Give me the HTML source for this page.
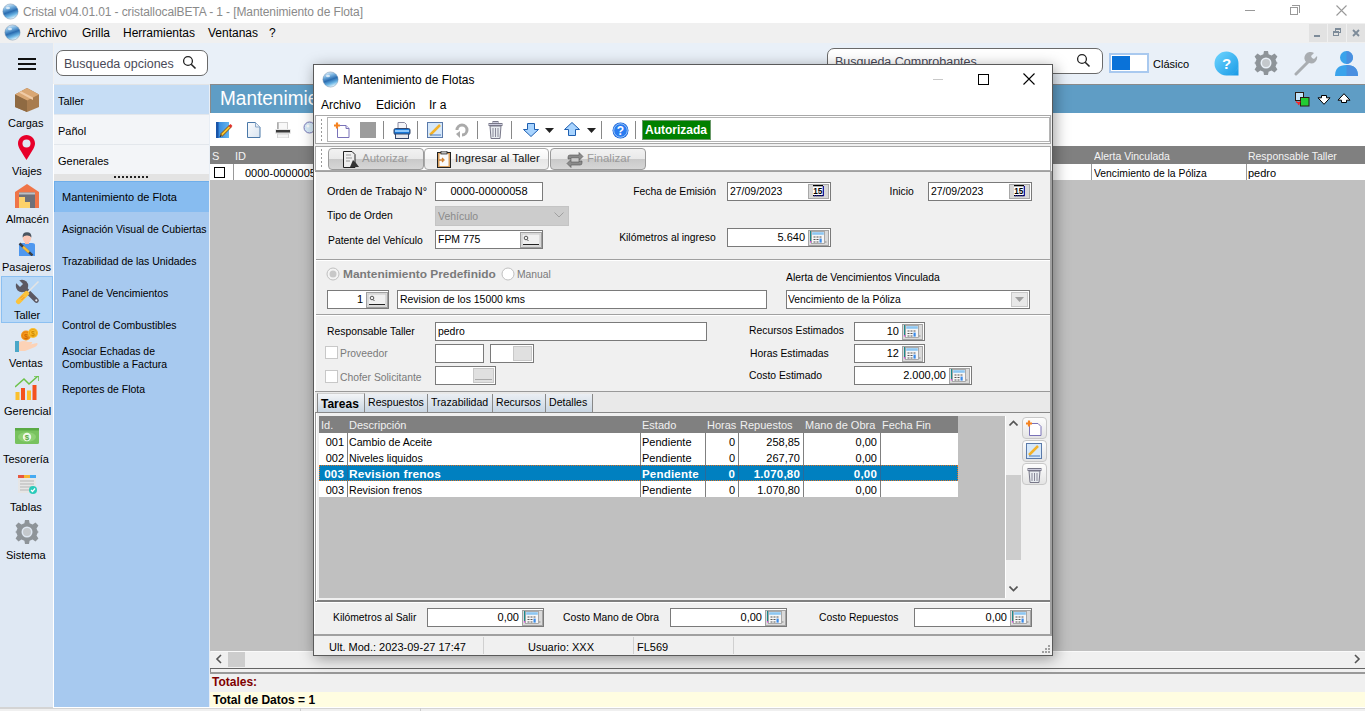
<!DOCTYPE html>
<html><head><meta charset="utf-8">
<style>
*{margin:0;padding:0;box-sizing:border-box}
html,body{width:1365px;height:711px;overflow:hidden;background:#f0f0f0;font-family:"Liberation Sans",sans-serif;font-size:12px;color:#000}
.a{position:absolute}
.t{position:absolute;white-space:nowrap;line-height:1}
</style></head><body>
<!-- title bar -->
<div class="a" style="left:0;top:0;width:1365px;height:23px;background:#fff"></div>
<!-- menu bar -->
<div class="a" style="left:0;top:23px;width:1365px;height:20px;background:#f0f0f0"></div>
<!-- left sidebar -->
<div class="a" style="left:0;top:43px;width:53px;height:664px;background:#dfe8f3"></div>
<div class="a" style="left:53px;top:84px;width:1px;height:624px;background:#fff"></div>
<!-- top toolbar -->
<div class="a" style="left:54px;top:43px;width:1311px;height:41px;background:#e9f0f8"></div>
<!-- menu panel -->
<div class="a" style="left:54px;top:84px;width:156px;height:30px;background:#c6ddf5"></div>
<div class="a" style="left:54px;top:114px;width:156px;height:60px;background:#f3f5f8"></div>
<div class="a" style="left:54px;top:144px;width:156px;height:1px;background:#e3e7ec"></div>
<div class="a" style="left:54px;top:114px;width:156px;height:1px;background:#e3e7ec"></div>
<div class="a" style="left:54px;top:174px;width:156px;height:7px;background:#e3e3e3"></div>
<div class="a" style="left:54px;top:181px;width:156px;height:526px;background:#a7c9ef"></div>
<div class="a" style="left:54px;top:181px;width:156px;height:31px;background:#87bcf0;border-top:1px solid #6faeea;border-left:1px solid #6faeea"></div>
<!-- main area -->
<div class="a" style="left:209px;top:84px;width:1px;height:623px;background:#e8eef5"></div>
<div class="a" style="left:210px;top:84px;width:1155px;height:1px;background:#8a8a8a"></div>
<div class="a" style="left:210px;top:84px;width:1px;height:623px;background:#8a8a8a"></div>
<div class="a" style="left:211px;top:85px;width:1154px;height:28px;background:#5f9dc5"></div>
<div class="a" style="left:210px;top:113px;width:1155px;height:33px;background:#fff"></div>
<div class="a" style="left:210px;top:146px;width:1155px;height:18px;background:#808080"></div>
<div class="a" style="left:210px;top:164px;width:1155px;height:16px;background:#fff"></div>
<div class="a" style="left:210px;top:180px;width:1155px;height:471px;background:#c0c0c0"></div>
<div class="a" style="left:210px;top:651px;width:1155px;height:17px;background:#f0f0f0"></div>
<div class="a" style="left:211px;top:651px;width:1154px;height:1px;background:#fafafa"></div>
<div class="a" style="left:210px;top:668px;width:1155px;height:1px;background:#646464"></div>
<div class="a" style="left:210px;top:672px;width:1155px;height:2px;background:#999"></div>
<div class="a" style="left:210px;top:674px;width:1155px;height:18px;background:#f0f0f0"></div>
<div class="a" style="left:210px;top:692px;width:1155px;height:15px;background:#fffde1"></div>
<div class="a" style="left:53px;top:707px;width:1312px;height:1px;background:#fff"></div>
<div class="a" style="left:0;top:707px;width:53px;height:1px;background:#d4d4d4"></div>
<div class="a" style="left:0;top:708px;width:1365px;height:1px;background:#d4d4d4"></div>


<!-- TITLE BAR CONTENT -->
<svg class="a" style="left:2px;top:3px" width="17" height="17" viewBox="0 0 17 17"><defs><linearGradient id="gl" x1="0.2" y1="0" x2="0.55" y2="1"><stop offset="0" stop-color="#eef8ff"/><stop offset=".3" stop-color="#78b2e0"/><stop offset=".55" stop-color="#2a6cb0"/><stop offset=".78" stop-color="#6ab4e4"/><stop offset="1" stop-color="#e6f8ff"/></linearGradient></defs><circle cx="8.5" cy="8.5" r="7.6" fill="url(#gl)" stroke="#5a7a9a" stroke-width=".4"/><ellipse cx="6" cy="5" rx="2" ry="1.2" fill="#fff" opacity=".7"/></svg>
<div class="t" style="left:23px;top:6px;font-size:12px;color:#8a8a8a;letter-spacing:-0.1px">Cristal v04.01.01 - cristallocalBETA - 1 - [Mantenimiento de Flota]</div>
<div class="a" style="left:1245px;top:10px;width:10px;height:1px;background:#999"></div>
<div class="a" style="left:1292px;top:5px;width:8px;height:8px;border:1px solid #999;border-left:none;border-bottom:none"></div>
<div class="a" style="left:1290px;top:7px;width:8px;height:8px;border:1px solid #999;background:#fff"></div>
<svg class="a" style="left:1336px;top:5px" width="11" height="11"><path d="M0.5 0.5L10.5 10.5M10.5 0.5L0.5 10.5" stroke="#999" stroke-width="1.1"/></svg>
<!-- MENU BAR CONTENT -->
<svg class="a" style="left:4px;top:24px" width="17" height="17" viewBox="0 0 17 17"><circle cx="8.5" cy="8.5" r="7.6" fill="url(#gl)" stroke="#5a7a9a" stroke-width=".4"/><ellipse cx="6" cy="5" rx="2" ry="1.2" fill="#fff" opacity=".7"/></svg>
<div class="t" style="left:27px;top:27px;font-size:12px">Archivo</div>
<div class="t" style="left:82px;top:27px;font-size:12px">Grilla</div>
<div class="t" style="left:123px;top:27px;font-size:12px">Herramientas</div>
<div class="t" style="left:208px;top:27px;font-size:12px">Ventanas</div>
<div class="t" style="left:269px;top:27px;font-size:12px">?</div>
<div class="a" style="left:1309px;top:24px;width:18px;height:18px;background:#e2e2e2"></div>
<div class="a" style="left:1328px;top:24px;width:18px;height:18px;background:#e2e2e2"></div>
<div class="a" style="left:1347px;top:24px;width:18px;height:18px;background:#e2e2e2"></div>
<div class="a" style="left:1314px;top:35px;width:6px;height:2px;background:#7d8b99"></div>
<div class="a" style="left:1335px;top:28px;width:6px;height:5px;border:1px solid #7d8b99;border-top-width:2px"></div>
<div class="a" style="left:1333px;top:31px;width:6px;height:5px;border:1px solid #7d8b99;border-top-width:2px;background:#e2e2e2"></div>
<svg class="a" style="left:1352px;top:29px" width="8" height="8"><path d="M1 1L7 7M7 1L1 7" stroke="#7d8b99" stroke-width="1.8"/></svg>
<!-- SIDEBAR -->
<div class="a" style="left:18px;top:58px;width:18px;height:2px;background:#111"></div>
<div class="a" style="left:18px;top:63px;width:18px;height:2px;background:#111"></div>
<div class="a" style="left:18px;top:68px;width:18px;height:2px;background:#111"></div>
<!-- cargas box -->
<svg class="a" style="left:15px;top:88px" width="24" height="24" viewBox="0 0 24 24"><path d="M12 0L24 6.5V19L12 24L0 19V6.5Z" fill="#a87c4f"/><path d="M12 0L24 6.5L12 12.5L0 6.5Z" fill="#d9a774"/><path d="M0 6.5L12 12.5V24L0 19Z" fill="#8f6a42"/><path d="M6 3.2L18 9.4V12L16 11L4 4.6Z" fill="#f0cba6"/></svg>
<div class="t" style="left:8px;top:118px;font-size:11px">Cargas</div>
<svg class="a" style="left:18px;top:135px" width="17" height="25" viewBox="0 0 17 25"><path d="M8.5 0C3.8 0 0 3.8 0 8.5C0 12 2 14.5 8.5 25C15 14.5 17 12 17 8.5C17 3.8 13.2 0 8.5 0Z" fill="#e8002a"/><circle cx="8.5" cy="8.5" r="4" fill="#dfe8f3"/></svg>
<div class="t" style="left:12px;top:166px;font-size:11px">Viajes</div>
<svg class="a" style="left:15px;top:184px" width="24" height="24" viewBox="0 0 24 24"><path d="M0 8L12 0L24 8V24H0Z" fill="#ef7548"/><rect x="4" y="8.5" width="16" height="15.5" fill="#6e7079"/><rect x="4" y="8.5" width="16" height="2" fill="#bcc0c4"/><rect x="4" y="13" width="6" height="11" fill="#fdd26a"/><rect x="10" y="18" width="5" height="6" fill="#fdd26a"/></svg>
<div class="t" style="left:6px;top:214px;font-size:11px">Almacén</div>
<svg class="a" style="left:18px;top:231px" width="18" height="25" viewBox="0 0 18 25"><path d="M1 14Q1 12 4 12H14Q17 12 17 14V25H1Z" fill="#4f98ef"/><rect x="7" y="9" width="4" height="4" fill="#f7b7a3"/><ellipse cx="9" cy="7" rx="4.2" ry="4.8" fill="#fcc8b6"/><path d="M4.6 6.5Q4.2 1.2 9 1.2Q13.8 1.2 13.4 6.5Q12 4.2 9 4.4Q6 4.2 4.6 6.5Z" fill="#4a5560"/><path d="M1.5 12.5L14.5 24.5" stroke="#3a3f46" stroke-width="2.4"/><path d="M5 15.8L11 21.3" stroke="#f6bd3a" stroke-width="2.6"/></svg>
<div class="t" style="left:2px;top:262px;font-size:11px">Pasajeros</div>
<div class="a" style="left:1px;top:276px;width:52px;height:47px;background:#b7d7f6;border:1px solid #8cc0f1"></div>
<svg class="a" style="left:15px;top:279px" width="26" height="26" viewBox="0 0 26 26"><path d="M9 9L21.5 21.5" stroke="#5b5862" stroke-width="4.6" stroke-linecap="round"/><circle cx="7" cy="7" r="6.2" fill="#5b5862"/><path d="M1 1L6.5 6.5" stroke="#b7d7f6" stroke-width="4.2"/><circle cx="21.3" cy="21.3" r="1.1" fill="#e8eef5"/><path d="M13 13L23.5 2.5" stroke="#e4e4e4" stroke-width="1.6"/><path d="M3.5 22.5L11.5 14.5" stroke="#fbc33c" stroke-width="5" stroke-linecap="round"/><path d="M5 19.5L8 16.5M6.5 21L9.5 18" stroke="#f08a2a" stroke-width="1"/></svg>
<div class="t" style="left:14px;top:310px;font-size:11px">Taller</div>
<svg class="a" style="left:15px;top:328px" width="24" height="24" viewBox="0 0 24 24"><circle cx="11" cy="7.5" r="5" fill="#f59a1d"/><circle cx="11" cy="7.5" r="3.6" fill="none" stroke="#e07a10" stroke-width=".8"/><circle cx="18" cy="5" r="5" fill="#fbbf2f"/><circle cx="18" cy="5" r="3.6" fill="none" stroke="#e8a010" stroke-width=".8"/><text x="11" y="10.5" font-family="Liberation Sans" font-size="7" font-weight="bold" text-anchor="middle" fill="#d06a00">$</text><text x="18" y="8" font-family="Liberation Sans" font-size="7" font-weight="bold" text-anchor="middle" fill="#d08a00">$</text><path d="M0 13H4V24H0Z" fill="#4aa7c8"/><path d="M4 14Q9 12 13 14H17Q18 16 13 17L22 15Q24 16 20 19L10 23H4Z" fill="#fcd2b6"/></svg>
<div class="t" style="left:9px;top:358px;font-size:11px">Ventas</div>
<svg class="a" style="left:15px;top:376px" width="24" height="24" viewBox="0 0 24 24"><path d="M0 11L9 3L14 8L23 0" stroke="#6cc24a" stroke-width="1.5" fill="none"/><path d="M19 0H24V5" stroke="#6cc24a" stroke-width="1.5" fill="none"/><rect x="0.5" y="16" width="4" height="8" fill="#fbc02d"/><rect x="6" y="12" width="4" height="12" fill="#f4511e"/><rect x="12" y="14.5" width="4" height="9.5" fill="#fbc02d"/><rect x="17.5" y="9" width="4" height="15" fill="#f4511e"/></svg>
<div class="t" style="left:4px;top:406px;font-size:11px">Gerencial</div>
<svg class="a" style="left:15px;top:428px" width="24" height="16" viewBox="0 0 24 16"><rect x="0" y="0" width="24" height="16" rx="1.5" fill="#78c25e"/><rect x="0" y="0" width="24" height="2.5" fill="#5aaa44"/><ellipse cx="12" cy="9" rx="9" ry="4.8" fill="#8ed174"/><circle cx="12" cy="9" r="4.2" fill="#eef8e8"/><text x="12" y="12" font-family="Liberation Sans" font-size="8" font-weight="bold" text-anchor="middle" fill="#5aaa44">$</text></svg>
<div class="t" style="left:3px;top:454px;font-size:11px">Tesorería</div>
<svg class="a" style="left:18px;top:475px" width="19" height="19" viewBox="0 0 19 19"><rect x="0" y="0" width="18" height="3" fill="#e8573f"/><rect x="6" y="0" width="6" height="3" fill="#f7b731"/><rect x="12" y="0" width="6" height="3" fill="#45aaf2"/><rect x="0" y="3" width="18" height="15" fill="#e6e6e6"/><path d="M2 6H16M2 9H16M2 12H16M2 15H16" stroke="#b5b5b5" stroke-width="1"/><circle cx="15" cy="15" r="4" fill="#2bcbba"/><path d="M13 15L14.5 16.5L17 13.5" stroke="#fff" stroke-width="1.2" fill="none"/></svg>
<div class="t" style="left:10px;top:502px;font-size:11px">Tablas</div>
<svg class="a" style="left:15px;top:520px" width="24" height="24" viewBox="0 0 24 24"><path d="M10 0H14L14.6 3.2L17.6 4.5L20.5 2.6L23.4 5.5L21.5 8.4L22.8 11.4L24 12V12L22.8 12.6L21.5 15.6L23.4 18.5L20.5 21.4L17.6 19.5L14.6 20.8L14 24H10L9.4 20.8L6.4 19.5L3.5 21.4L0.6 18.5L2.5 15.6L1.2 12.6L0 12L1.2 11.4L2.5 8.4L0.6 5.5L3.5 2.6L6.4 4.5L9.4 3.2Z" fill="#8e9499"/><circle cx="12" cy="12" r="5.5" fill="#dfe8f3"/><circle cx="12" cy="12" r="4" fill="#c4c8cc"/></svg>
<div class="t" style="left:6px;top:550px;font-size:11px">Sistema</div>


<!-- TOP TOOLBAR CONTENT -->
<div class="a" style="left:56px;top:50px;width:152px;height:26px;border:1px solid #6a6a6a;border-radius:7px;background:#fff"></div>
<div class="t" style="left:64px;top:58px;font-size:12.5px;color:#4a4a58">Busqueda opciones</div>
<svg class="a" style="left:182px;top:55px" width="16" height="16" viewBox="0 0 16 16"><circle cx="6" cy="6" r="4.4" stroke="#222" stroke-width="1.3" fill="none"/><path d="M9.2 9.2L13.5 13.5" stroke="#222" stroke-width="1.6"/></svg>
<div class="a" style="left:827px;top:48px;width:276px;height:26px;border:1px solid #6a6a6a;border-radius:7px;background:#fff"></div>
<div class="t" style="left:835px;top:56px;font-size:12.5px;color:#4a4a58">Busqueda Comprobantes</div>
<svg class="a" style="left:1076px;top:53px" width="16" height="16" viewBox="0 0 16 16"><circle cx="6" cy="6" r="4.4" stroke="#222" stroke-width="1.3" fill="none"/><path d="M9.2 9.2L13.5 13.5" stroke="#222" stroke-width="1.6"/></svg>
<div class="a" style="left:1109px;top:53px;width:40px;height:20px;border:2px solid #a9c9ef;background:#fff"></div>
<div class="a" style="left:1112px;top:56px;width:18px;height:14px;background:#0a72d8"></div>
<div class="t" style="left:1153px;top:59px;font-size:11px">Clásico</div>
<svg class="a" style="left:1214px;top:51px" width="25" height="25" viewBox="0 0 25 25"><defs><linearGradient id="qg" x1="0" y1="0" x2="1" y2="1"><stop offset="0" stop-color="#6fd6ff"/><stop offset="1" stop-color="#1a9ae6"/></linearGradient></defs><path d="M12.5 0.5A12 12 0 1 0 24.5 13V24.5H12.5A12 12 0 0 0 12.5 0.5Z" fill="url(#qg)"/><text x="12.5" y="18" font-family="Liberation Sans" font-size="15" font-weight="bold" fill="#fff" text-anchor="middle">?</text></svg>
<svg class="a" style="left:1254px;top:51px" width="24" height="24" viewBox="0 0 24 24"><path d="M10 0H14L14.6 3.2L17.6 4.5L20.5 2.6L23.4 5.5L21.5 8.4L22.8 11.4L24 12V12L22.8 12.6L21.5 15.6L23.4 18.5L20.5 21.4L17.6 19.5L14.6 20.8L14 24H10L9.4 20.8L6.4 19.5L3.5 21.4L0.6 18.5L2.5 15.6L1.2 12.6L0 12L1.2 11.4L2.5 8.4L0.6 5.5L3.5 2.6L6.4 4.5L9.4 3.2Z" fill="#8e9499"/><circle cx="12" cy="12" r="5.5" fill="#e9f0f8"/><circle cx="12" cy="12" r="4" fill="#c4c8cc"/></svg>
<svg class="a" style="left:1294px;top:51px" width="25" height="25" viewBox="0 0 25 25"><path d="M2 23L15 10" stroke="#a9adb1" stroke-width="3" stroke-linecap="round"/><path d="M13 12A6 6 0 0 1 20 2L17 5L18 7L20 8L23 5A6 6 0 0 1 15 12Z" fill="#a9adb1"/></svg>
<svg class="a" style="left:1335px;top:51px" width="23" height="25" viewBox="0 0 23 25"><circle cx="11.5" cy="6.5" r="6.5" fill="#3aa3eb"/><path d="M11.5 0A6.5 6.5 0 0 1 11.5 13Z" fill="#4a8fe0"/><path d="M0 25Q0 14 11.5 14Q23 14 23 25Z" fill="#3aa3eb"/><path d="M11.5 14Q23 14 23 25H11.5Z" fill="#4a8fe0"/></svg>
<div class="a" style="left:54px;top:84px;width:156px;height:1px;background:#e2e4e6"></div>
<!-- MENU PANEL TEXT -->
<div class="t" style="left:58px;top:96px;font-size:11px">Taller</div>
<div class="t" style="left:58px;top:126px;font-size:11px">Pañol</div>
<div class="t" style="left:58px;top:156px;font-size:11px">Generales</div>
<div class="a" style="left:114px;top:176px;width:34px;height:2px;background:repeating-linear-gradient(90deg,#222 0 2px,transparent 2px 4px)"></div>
<div class="t" style="left:62px;top:192px;font-size:11px">Mantenimiento de Flota</div>
<div class="t" style="left:62px;top:224px;font-size:11px;transform:scaleX(.95);transform-origin:0 0">Asignación Visual de Cubiertas</div>
<div class="t" style="left:62px;top:256px;font-size:11px;transform:scaleX(.95);transform-origin:0 0">Trazabilidad de las Unidades</div>
<div class="t" style="left:62px;top:288px;font-size:11px;transform:scaleX(.95);transform-origin:0 0">Panel de Vencimientos</div>
<div class="t" style="left:62px;top:320px;font-size:11px;transform:scaleX(.95);transform-origin:0 0">Control de Combustibles</div>
<div class="t" style="left:62px;top:346px;font-size:11px;transform:scaleX(.95);transform-origin:0 0">Asociar Echadas de</div>
<div class="t" style="left:62px;top:359px;font-size:11px;transform:scaleX(.95);transform-origin:0 0">Combustible a Factura</div>
<div class="t" style="left:62px;top:384px;font-size:11px;transform:scaleX(.95);transform-origin:0 0">Reportes de Flota</div>
<!-- MAIN HEADER -->
<div class="t" style="left:220px;top:89px;font-size:19.5px;color:#fff;transform:scaleX(.975);transform-origin:0 0">Mantenimiento de Flota</div>
<svg class="a" style="left:1295px;top:92px" width="15" height="15" viewBox="0 0 15 15"><rect x="0.5" y="0.5" width="8" height="8" fill="#c4e4fa" stroke="#2a1a10"/><rect x="5.5" y="5.5" width="8.5" height="8.5" fill="#22cc33" stroke="#2a1a10"/><path d="M1 9.5L3 11L4.5 10.5L3.5 13" stroke="#f22" stroke-width="1.4" fill="none"/></svg>
<svg class="a" style="left:1317px;top:95px" width="14" height="10" viewBox="0 0 14 10"><path d="M4.5 0.5H9.5V2.8H13L7 9.3L1 2.8H4.5Z" fill="#fff" stroke="#000"/></svg>
<svg class="a" style="left:1337px;top:93px" width="14" height="10" viewBox="0 0 14 10"><path d="M4.5 9.5H9.5V7.2H13L7 0.7L1 7.2H4.5Z" fill="#fff" stroke="#000"/></svg>
<!-- MAIN TOOLBAR ICONS -->
<svg class="a" style="left:216px;top:122px" width="17" height="16" viewBox="0 0 17 16"><defs><linearGradient id="bk" x1="0" x2="1"><stop offset="0" stop-color="#1f62c0"/><stop offset=".25" stop-color="#3a8ee0"/><stop offset="1" stop-color="#62b4ee"/></linearGradient></defs><rect x="0" y="0" width="13" height="16" fill="url(#bk)"/><rect x="0" y="0" width="2.5" height="16" fill="#1a55a8"/><path d="M5 13.5L14.5 4" stroke="#7a4a10" stroke-width="3.2"/><path d="M5 13.5L14.5 4" stroke="#f5c431" stroke-width="2"/><path d="M13.5 5L15.5 3" stroke="#e0302a" stroke-width="2.6"/><path d="M4 15L5.5 12.5" stroke="#333" stroke-width="1.2"/></svg>
<svg class="a" style="left:247px;top:122px" width="14" height="17" viewBox="0 0 14 17"><defs><linearGradient id="dg" x1="0" y1="0" x2="1" y2="1"><stop offset="0" stop-color="#fbfcfe"/><stop offset="1" stop-color="#d8e4f0"/></linearGradient></defs><path d="M0.5 0.5H8.5L13 5V15.5H0.5Z" fill="url(#dg)" stroke="#4a78a8"/><path d="M8.5 0.5V5H13" fill="#e8eef6" stroke="#8aa8c8"/></svg>
<svg class="a" style="left:275px;top:122px" width="16" height="16" viewBox="0 0 16 16"><rect x="2.5" y="0.5" width="10" height="7" fill="#f8f8f8" stroke="#d0d0d0"/><rect x="2.5" y="0.5" width="1" height="7" fill="#888"/><rect x="0" y="7" width="16" height="5" rx="1" fill="#e6e6e6"/><rect x="1" y="8" width="14" height="2.5" fill="#3a3a3a"/><rect x="2.5" y="12" width="11" height="4" fill="#f4f4f4" stroke="#d4d4d4"/></svg>
<svg class="a" style="left:302px;top:121px" width="13" height="17" viewBox="0 0 13 17"><circle cx="7.5" cy="6.5" r="5.5" fill="#d8ecfa" stroke="#7a78b8"/><circle cx="6" cy="5" r="1.5" fill="#fff"/><path d="M11.5 10.5L13 13" stroke="#e0902a" stroke-width="2"/></svg>
<!-- MAIN GRID -->
<div class="t" style="left:212px;top:151px;font-size:11px;color:#f4f4f4">S</div>
<div class="t" style="left:235px;top:151px;font-size:11px;color:#f4f4f4">ID</div>
<div class="t" style="left:1094px;top:151px;font-size:11px;color:#f4f4f4;transform:scaleX(.95);transform-origin:0 0">Alerta Vinculada</div>
<div class="t" style="left:1248px;top:151px;font-size:11px;color:#f4f4f4;transform:scaleX(.95);transform-origin:0 0">Responsable Taller</div>
<div class="a" style="left:214px;top:167px;width:11px;height:11px;border:1px solid #000;background:#fff"></div>
<div class="a" style="left:233px;top:164px;width:1px;height:16px;background:#999"></div>
<div class="t" style="left:245px;top:168px;font-size:11px">0000-00000058</div>
<div class="a" style="left:1091px;top:164px;width:1px;height:16px;background:#999"></div>
<div class="t" style="left:1094px;top:168px;font-size:11px;transform:scaleX(.94);transform-origin:0 0">Vencimiento de la Póliza</div>
<div class="a" style="left:1246px;top:164px;width:1px;height:16px;background:#999"></div>
<div class="t" style="left:1248px;top:168px;font-size:11px">pedro</div>
<!-- H SCROLL + TOTALS -->
<svg class="a" style="left:215px;top:654px" width="8" height="10" viewBox="0 0 8 10"><path d="M6 1L2 5L6 9" stroke="#555" stroke-width="1.6" fill="none"/></svg>
<div class="a" style="left:228px;top:652px;width:17px;height:15px;background:#cdcdcd"></div>
<svg class="a" style="left:1353px;top:654px" width="8" height="10" viewBox="0 0 8 10"><path d="M2 1L6 5L2 9" stroke="#555" stroke-width="1.6" fill="none"/></svg>
<div class="t" style="left:212px;top:676px;font-size:12px;font-weight:bold;color:#800000">Totales:</div>
<div class="t" style="left:213px;top:694px;font-size:12px;font-weight:bold">Total de Datos = 1</div>
<div class="a" style="left:300px;top:708px;width:1px;height:3px;background:#ccc"></div>
<div class="a" style="left:420px;top:708px;width:1px;height:3px;background:#ccc"></div>

<!-- dialog -->
<div class="a" style="left:313px;top:64px;width:740px;height:592px;background:#f0f0f0;border:1px solid #5a5a5a;box-shadow:2px 3px 14px rgba(0,0,0,.38)"></div>
<div class="a" style="left:314px;top:65px;width:738px;height:50px;background:#fff"></div>
<svg class="a" style="left:322px;top:71px" width="17" height="17" viewBox="0 0 17 17"><circle cx="8.5" cy="8.5" r="7.6" fill="url(#gl)" stroke="#5a7a9a" stroke-width=".4"/><ellipse cx="6" cy="5" rx="2" ry="1.2" fill="#fff" opacity=".7"/></svg>
<div class="t" style="left:343px;top:74px;font-size:12px;">Mantenimiento de Flotas</div>
<div class="a" style="left:933px;top:79px;width:10px;height:1px;background:#c8c8c8"></div>
<div class="a" style="left:978px;top:74px;width:11px;height:11px;border:1px solid #000"></div>
<svg class="a" style="left:1023px;top:73px" width="12" height="12"><path d="M0.5 0.5L11.5 11.5M11.5 0.5L0.5 11.5" stroke="#000" stroke-width="1.1"/></svg>
<div class="t" style="left:321px;top:99px;font-size:12px;">Archivo</div>
<div class="t" style="left:376px;top:99px;font-size:12px;">Edición</div>
<div class="t" style="left:429px;top:99px;font-size:12px;">Ir a</div>
<div class="a" style="left:315px;top:115px;width:736px;height:29px;border:1px solid #a8a8a8;background:#fff"></div>
<div class="a" style="left:327px;top:117px;width:723px;height:25px;border:1px solid #b4b4b4;background:#fff"></div>
<div class="a" style="left:321px;top:119px;width:1px;height:22px;background:repeating-linear-gradient(180deg,#999 0 2px,transparent 2px 4px)"></div>
<div class="a" style="left:315px;top:146px;width:736px;height:25px;border:1px solid #a8a8a8;background:#fff"></div>
<div class="a" style="left:321px;top:149px;width:1px;height:20px;background:repeating-linear-gradient(180deg,#999 0 2px,transparent 2px 4px)"></div>
<div class="a" style="left:314px;top:171px;width:738px;height:1px;background:#a0a0a0"></div>
<svg class="a" style="left:334px;top:122px" width="16" height="16" viewBox="0 0 16 16"><path d="M3.5 3.5H12L15 6.5V15.5H3.5Z" fill="#fff" stroke="#7a72b8"/><path d="M12 3.5V6.5H15" fill="#e8e8f4" stroke="#7a72b8"/><path d="M3 0.5V6.5M0 3.5H6" stroke="#f5821f" stroke-width="2.2"/></svg>
<div class="a" style="left:360px;top:122px;width:16px;height:16px;background:#9c9c9c"></div>
<div class="a" style="left:383px;top:121px;width:1px;height:18px;background:#888"></div>
<svg class="a" style="left:393px;top:122px" width="18" height="17" viewBox="0 0 18 17"><path d="M5 0.5H11.5L13.5 2.5V7H5Z" fill="#f4f4f8" stroke="#8a8aa0"/><rect x="1" y="6.5" width="16" height="6" rx="1.5" fill="#1a78d8" stroke="#35466a"/><rect x="2" y="8" width="14" height="2" fill="#8cc8ff"/><rect x="2.5" y="12" width="13" height="4.5" fill="#e6e8ee" stroke="#35466a"/></svg>
<div class="a" style="left:417px;top:121px;width:1px;height:18px;background:#888"></div>
<svg class="a" style="left:427px;top:122px" width="17" height="16" viewBox="0 0 17 16"><rect x="0.5" y="0.5" width="15" height="15" fill="#d6e8fa" stroke="#5a7aaa"/><path d="M3 13L13 3" stroke="#f3b22a" stroke-width="2.5"/><path d="M3 13H14" stroke="#4a7ac0" stroke-width="1"/></svg>
<svg class="a" style="left:455px;top:123px" width="14" height="15" viewBox="0 0 14 15"><path d="M2 7A5 5 0 1 1 7 12" stroke="#aaa" stroke-width="3" fill="none"/><path d="M1 11L5 15V8Z" fill="#aaa"/></svg>
<div class="a" style="left:477px;top:121px;width:1px;height:18px;background:#888"></div>
<svg class="a" style="left:488px;top:121px" width="15" height="18" viewBox="0 0 15 18"><rect x="1" y="2.5" width="13" height="2" fill="#ccd" stroke="#778"/><rect x="5" y="0.5" width="5" height="2" fill="#ccd" stroke="#778"/><path d="M2 5H13L12 17.5H3Z" fill="#e8ecf0" stroke="#778"/><path d="M5 7V16M7.5 7V16M10 7V16" stroke="#889"/></svg>
<div class="a" style="left:511px;top:121px;width:1px;height:18px;background:#888"></div>
<svg class="a" style="left:523px;top:123px" width="16" height="14" viewBox="0 0 16 14"><path d="M4.5 0.5H11.5V6.5H15.5L8 13.5L0.5 6.5H4.5Z" fill="#a8d4ff" stroke="#1e5fb0"/></svg>
<svg class="a" style="left:545px;top:128px" width="9" height="5"><path d="M0 0H9L4.5 5Z" fill="#222"/></svg>
<svg class="a" style="left:564px;top:122px" width="16" height="14" viewBox="0 0 16 14"><path d="M4.5 13.5H11.5V7.5H15.5L8 0.5L0.5 7.5H4.5Z" fill="#a8d4ff" stroke="#1e5fb0"/></svg>
<svg class="a" style="left:587px;top:128px" width="9" height="5"><path d="M0 0H9L4.5 5Z" fill="#222"/></svg>
<div class="a" style="left:601px;top:121px;width:1px;height:18px;background:#888"></div>
<svg class="a" style="left:612px;top:122px" width="17" height="17" viewBox="0 0 17 17"><circle cx="8.5" cy="8.5" r="8" fill="#1360d8"/><circle cx="8.5" cy="8.5" r="6.8" fill="#2a7cf0" stroke="#bfe0ff" stroke-width=".8"/><text x="8.5" y="13" font-family="Liberation Sans" font-size="12" font-weight="bold" text-anchor="middle" fill="#fff">?</text></svg>
<div class="a" style="left:635px;top:121px;width:1px;height:18px;background:#888"></div>
<div class="a" style="left:642px;top:120px;width:69px;height:20px;background:#008000;border:1px solid #6a9a6a"></div>
<div class="t" style="left:645px;top:124px;font-size:12px;font-weight:bold;color:#fff">Autorizada</div>
<div class="a" style="left:328px;top:148px;width:96px;height:22px;background:linear-gradient(180deg,#f2f2f2 0,#e9e9e9 50%,#c9c9c9 51%,#d6d6d6 100%);border:1px solid #9a9a9a;border-radius:4px"></div>
<svg class="a" style="left:343px;top:151px" width="16" height="17" viewBox="0 0 16 17"><path d="M0.5 0.5H9L12 3.5V16.5H0.5Z" fill="#eee" stroke="#222"/><path d="M3 4H8M3 7H9M3 10H7" stroke="#999"/><path d="M7 16L10 9L13 12L16 16Z" fill="#333"/></svg>
<div class="t" style="left:362px;top:153px;font-size:11.5px;color:#9a9a9a">Autorizar</div>
<div class="a" style="left:424px;top:148px;width:125px;height:22px;background:linear-gradient(180deg,#ffffff 0,#f6f6f6 50%,#e6e6e6 51%,#eeeeee 100%);border:1px solid #a8a8a8;border-radius:4px"></div>
<svg class="a" style="left:437px;top:151px" width="14" height="17" viewBox="0 0 14 17"><rect x="0.5" y="1.5" width="13" height="15" fill="#d8a060" stroke="#222"/><rect x="2.5" y="3" width="9" height="12" fill="#fafafa"/><rect x="4" y="0" width="6" height="3" fill="#bbb" stroke="#333" stroke-width=".8"/><path d="M2 9H6M5 7L7 9L5 11" stroke="#d08030" stroke-width="1.3" fill="none"/></svg>
<div class="t" style="left:455px;top:153px;font-size:11.5px;color:#111">Ingresar al Taller</div>
<div class="a" style="left:550px;top:148px;width:96px;height:22px;background:linear-gradient(180deg,#f2f2f2 0,#e9e9e9 50%,#c9c9c9 51%,#d6d6d6 100%);border:1px solid #9a9a9a;border-radius:4px"></div>
<svg class="a" style="left:566px;top:152px" width="18" height="16" viewBox="0 0 18 16"><path d="M2 7V5Q2 3 4 3H13V0.5L17 4.5L13 8.5V6H5V7Z" fill="#8a8a8a" stroke="#555" stroke-width=".6"/><path d="M16 9V11Q16 13 14 13H5V15.5L1 11.5L5 7.5V10H13V9Z" fill="#8a8a8a" stroke="#555" stroke-width=".6"/></svg>
<div class="t" style="left:587px;top:153px;font-size:11.5px;color:#9a9a9a">Finalizar</div>
<div class="t" style="left:327px;top:186px;font-size:11px;transform:scaleX(0.99);transform-origin:0 0;">Orden de Trabajo N°</div>
<div class="a" style="left:435px;top:182px;width:108px;height:19px;background:#fff;border:1px solid #7a7a7a"></div>
<div class="t" style="left:435px;width:108px;text-align:center;top:186px;font-size:11px;color:#000">0000-00000058</div>
<div class="t" style="right:649px;top:186px;font-size:11px;transform:scaleX(0.94);transform-origin:100% 0;">Fecha de Emisión</div>
<div class="a" style="left:727px;top:182px;width:104px;height:19px;background:#fff;border:1px solid #7a7a7a"></div>
<div class="t" style="left:730px;top:186px;font-size:11px;transform:scaleX(0.95);transform-origin:0 0;color:#000">27/09/2023</div>
<svg class="a" style="left:808px;top:184px" width="21" height="15" viewBox="0 0 21 15"><rect x="0.5" y="0.5" width="20" height="14" fill="#d8d8d8" stroke="#a8a8a8"/><rect x="5" y="1" width="10" height="11" fill="#fff"/><rect x="5" y="1" width="10" height="1.3" fill="#000"/><rect x="5" y="11" width="10" height="1.2" fill="#000"/><path d="M6 11.6H15" stroke="#1a1aa0" stroke-width="1.2" stroke-dasharray="1.2 1"/><rect x="14.7" y="2" width="1.3" height="10.2" fill="#1a1a9a"/><text x="9.8" y="9.9" font-family="Liberation Sans" font-size="8.2" font-weight="bold" text-anchor="middle" fill="#000">15</text></svg>
<div class="t" style="right:451px;top:186px;font-size:11px;transform:scaleX(0.94);transform-origin:100% 0;">Inicio</div>
<div class="a" style="left:928px;top:182px;width:104px;height:19px;background:#fff;border:1px solid #7a7a7a"></div>
<div class="t" style="left:931px;top:186px;font-size:11px;transform:scaleX(0.95);transform-origin:0 0;color:#000">27/09/2023</div>
<svg class="a" style="left:1009px;top:184px" width="21" height="15" viewBox="0 0 21 15"><rect x="0.5" y="0.5" width="20" height="14" fill="#d8d8d8" stroke="#a8a8a8"/><rect x="5" y="1" width="10" height="11" fill="#fff"/><rect x="5" y="1" width="10" height="1.3" fill="#000"/><rect x="5" y="11" width="10" height="1.2" fill="#000"/><path d="M6 11.6H15" stroke="#1a1aa0" stroke-width="1.2" stroke-dasharray="1.2 1"/><rect x="14.7" y="2" width="1.3" height="10.2" fill="#1a1a9a"/><text x="9.8" y="9.9" font-family="Liberation Sans" font-size="8.2" font-weight="bold" text-anchor="middle" fill="#000">15</text></svg>
<div class="t" style="left:327px;top:210px;font-size:11px;transform:scaleX(0.94);transform-origin:0 0;">Tipo de Orden</div>
<div class="a" style="left:435px;top:206px;width:134px;height:20px;background:#cccccc;border:1px solid #c4c4c4"></div>
<div class="t" style="left:438px;top:211px;font-size:11px;transform:scaleX(0.95);transform-origin:0 0;color:#8a8a8a">Vehículo</div>
<svg class="a" style="left:554px;top:212px" width="10" height="7"><path d="M0.5 0.5L5 5L9.5 0.5" stroke="#a0a0a0" fill="none"/></svg>
<div class="t" style="left:328px;top:235px;font-size:11px;transform:scaleX(0.94);transform-origin:0 0;">Patente del Vehículo</div>
<div class="a" style="left:435px;top:230px;width:108px;height:19px;background:#fff;border:1px solid #7a7a7a"></div>
<div class="t" style="left:438px;top:234px;font-size:11px;transform:scaleX(0.95);transform-origin:0 0;color:#000">FPM 775</div>
<svg class="a" style="left:520px;top:232px" width="22" height="16" viewBox="0 0 22 16"><rect x="0.5" y="0.5" width="21" height="15" fill="#e6e6e6" stroke="#a0a0a0"/><rect x="2" y="2" width="18" height="12" fill="#f0f0f0" stroke="#c8c8c8"/><circle cx="6" cy="6" r="1.8" stroke="#555" fill="none"/><path d="M7 7.5L8.5 9" stroke="#555"/><path d="M3 12.5H19" stroke="#222" stroke-width="1"/></svg>
<div class="t" style="right:649px;top:232px;font-size:11px;transform:scaleX(0.94);transform-origin:100% 0;">Kilómetros al ingreso</div>
<div class="a" style="left:727px;top:228px;width:104px;height:19px;background:#fff;border:1px solid #7a7a7a"></div>
<div class="t" style="left:727px;width:78px;text-align:right;top:232px;font-size:11px;color:#000">5.640</div>
<svg class="a" style="left:808px;top:230px" width="21" height="16" viewBox="0 0 21 16"><rect x="0.5" y="0.5" width="20" height="15" fill="#dadada" stroke="#a4a4a4"/><rect x="2" y="1" width="1.2" height="11" fill="#1a8a8a"/><rect x="2" y="11" width="1.2" height="1.5" fill="#e040e0"/><rect x="3.5" y="1.5" width="13" height="12" fill="#f6f6f6" stroke="#9a9a9a" stroke-width=".8"/><rect x="4.2" y="2.2" width="11.6" height="2.6" fill="#8cc6f2"/><path d="M5.5 7h2M8.5 7h2M5.5 9.5h2M8.5 9.5h2M5.5 12h2M8.5 12h2M11.5 7h2" stroke="#555" stroke-width="1.1"/><rect x="11.5" y="8.6" width="2.2" height="4" fill="#3a8ae8"/><rect x="17.3" y="11.5" width="1" height="1" fill="#666"/></svg>
<div class="a" style="left:315px;top:259px;width:735px;height:1px;background:#a0a0a0"></div>
<div class="a" style="left:315px;top:260px;width:735px;height:1px;background:#fff"></div>
<svg class="a" style="left:326px;top:267px" width="14" height="14"><circle cx="7" cy="7" r="6" fill="#f4f4f4" stroke="#c0c0c0"/><circle cx="7" cy="7" r="3.5" fill="#c8c8c8"/></svg>
<div class="t" style="left:343px;top:269px;font-size:11.5px;transform:scaleX(1.035);transform-origin:0 0;font-weight:bold;color:#7a7a7a">Mantenimiento Predefinido</div>
<svg class="a" style="left:501px;top:267px" width="14" height="14"><circle cx="7" cy="7" r="6" fill="#fff" stroke="#c0c0c0"/></svg>
<div class="t" style="left:517px;top:269px;font-size:11px;transform:scaleX(0.94);transform-origin:0 0;color:#7a7a7a">Manual</div>
<div class="t" style="left:786px;top:272px;font-size:11px;transform:scaleX(0.94);transform-origin:0 0;">Alerta de Vencimientos Vinculada</div>
<div class="a" style="left:327px;top:290px;width:62px;height:19px;background:#fff;border:1px solid #7a7a7a"></div>
<div class="t" style="left:327px;width:36px;text-align:right;top:294px;font-size:11px;color:#000">1</div>
<svg class="a" style="left:366px;top:292px" width="22" height="16" viewBox="0 0 22 16"><rect x="0.5" y="0.5" width="21" height="15" fill="#e6e6e6" stroke="#a0a0a0"/><rect x="2" y="2" width="18" height="12" fill="#f0f0f0" stroke="#c8c8c8"/><circle cx="6" cy="6" r="1.8" stroke="#555" fill="none"/><path d="M7 7.5L8.5 9" stroke="#555"/><path d="M3 12.5H19" stroke="#222" stroke-width="1"/></svg>
<div class="a" style="left:397px;top:290px;width:370px;height:19px;background:#fff;border:1px solid #7a7a7a"></div>
<div class="t" style="left:400px;top:294px;font-size:11px;transform:scaleX(0.95);transform-origin:0 0;color:#000">Revision de los 15000 kms</div>
<div class="a" style="left:786px;top:290px;width:244px;height:19px;background:#fff;border:1px solid #7a7a7a"></div>
<div class="t" style="left:788px;top:294px;font-size:11px;transform:scaleX(0.94);transform-origin:0 0;">Vencimiento de la Póliza</div>
<div class="a" style="left:1011px;top:292px;width:17px;height:15px;background:#e8e8e8;border:1px solid #c8c8c8"></div>
<svg class="a" style="left:1015px;top:297px" width="9" height="5"><path d="M0 0H9L4.5 5Z" fill="#a0a0a0"/></svg>
<div class="a" style="left:315px;top:314px;width:735px;height:1px;background:#a0a0a0"></div>
<div class="a" style="left:315px;top:315px;width:735px;height:1px;background:#fff"></div>
<div class="t" style="left:327px;top:326px;font-size:11px;transform:scaleX(0.94);transform-origin:0 0;">Responsable Taller</div>
<div class="a" style="left:435px;top:322px;width:272px;height:19px;background:#fff;border:1px solid #7a7a7a"></div>
<div class="t" style="left:438px;top:326px;font-size:11px;transform:scaleX(0.95);transform-origin:0 0;color:#000">pedro</div>
<div class="a" style="left:325px;top:346px;width:13px;height:13px;background:#fff;border:1px solid #c8c8c8"></div>
<div class="t" style="left:340px;top:348px;font-size:11px;transform:scaleX(0.94);transform-origin:0 0;color:#7a7a7a">Proveedor</div>
<div class="a" style="left:435px;top:344px;width:49px;height:19px;background:#fff;border:1px solid #7a7a7a"></div>
<div class="a" style="left:490px;top:344px;width:44px;height:19px;background:#fff;border:1px solid #7a7a7a"></div>
<div class="a" style="left:513px;top:346px;width:19px;height:15px;background:#e0e0e0;border:1px solid #c8c8c8"></div>
<div class="a" style="left:325px;top:370px;width:13px;height:13px;background:#fff;border:1px solid #c8c8c8"></div>
<div class="t" style="left:340px;top:372px;font-size:11px;transform:scaleX(0.94);transform-origin:0 0;color:#7a7a7a">Chofer Solicitante</div>
<div class="a" style="left:435px;top:366px;width:61px;height:19px;background:#fff;border:1px solid #7a7a7a"></div>
<div class="a" style="left:473px;top:368px;width:21px;height:15px;background:#e0e0e0;border:1px solid #c8c8c8"></div>
<div class="a" style="left:475px;top:379px;width:17px;height:1px;background:#aaa"></div>
<div class="t" style="left:749px;top:325px;font-size:11px;transform:scaleX(0.94);transform-origin:0 0;">Recursos Estimados</div>
<div class="a" style="left:854px;top:322px;width:71px;height:19px;background:#fff;border:1px solid #7a7a7a"></div>
<div class="t" style="left:854px;width:45px;text-align:right;top:326px;font-size:11px;color:#000">10</div>
<svg class="a" style="left:902px;top:324px" width="21" height="16" viewBox="0 0 21 16"><rect x="0.5" y="0.5" width="20" height="15" fill="#dadada" stroke="#a4a4a4"/><rect x="2" y="1" width="1.2" height="11" fill="#1a8a8a"/><rect x="2" y="11" width="1.2" height="1.5" fill="#e040e0"/><rect x="3.5" y="1.5" width="13" height="12" fill="#f6f6f6" stroke="#9a9a9a" stroke-width=".8"/><rect x="4.2" y="2.2" width="11.6" height="2.6" fill="#8cc6f2"/><path d="M5.5 7h2M8.5 7h2M5.5 9.5h2M8.5 9.5h2M5.5 12h2M8.5 12h2M11.5 7h2" stroke="#555" stroke-width="1.1"/><rect x="11.5" y="8.6" width="2.2" height="4" fill="#3a8ae8"/><rect x="17.3" y="11.5" width="1" height="1" fill="#666"/></svg>
<div class="t" style="left:750px;top:348px;font-size:11px;transform:scaleX(0.94);transform-origin:0 0;">Horas Estimadas</div>
<div class="a" style="left:854px;top:344px;width:71px;height:19px;background:#fff;border:1px solid #7a7a7a"></div>
<div class="t" style="left:854px;width:45px;text-align:right;top:348px;font-size:11px;color:#000">12</div>
<svg class="a" style="left:902px;top:346px" width="21" height="16" viewBox="0 0 21 16"><rect x="0.5" y="0.5" width="20" height="15" fill="#dadada" stroke="#a4a4a4"/><rect x="2" y="1" width="1.2" height="11" fill="#1a8a8a"/><rect x="2" y="11" width="1.2" height="1.5" fill="#e040e0"/><rect x="3.5" y="1.5" width="13" height="12" fill="#f6f6f6" stroke="#9a9a9a" stroke-width=".8"/><rect x="4.2" y="2.2" width="11.6" height="2.6" fill="#8cc6f2"/><path d="M5.5 7h2M8.5 7h2M5.5 9.5h2M8.5 9.5h2M5.5 12h2M8.5 12h2M11.5 7h2" stroke="#555" stroke-width="1.1"/><rect x="11.5" y="8.6" width="2.2" height="4" fill="#3a8ae8"/><rect x="17.3" y="11.5" width="1" height="1" fill="#666"/></svg>
<div class="t" style="left:749px;top:370px;font-size:11px;transform:scaleX(0.94);transform-origin:0 0;">Costo Estimado</div>
<div class="a" style="left:854px;top:366px;width:118px;height:19px;background:#fff;border:1px solid #7a7a7a"></div>
<div class="t" style="left:854px;width:92px;text-align:right;top:370px;font-size:11px;color:#000">2.000,00</div>
<svg class="a" style="left:949px;top:368px" width="21" height="16" viewBox="0 0 21 16"><rect x="0.5" y="0.5" width="20" height="15" fill="#dadada" stroke="#a4a4a4"/><rect x="2" y="1" width="1.2" height="11" fill="#1a8a8a"/><rect x="2" y="11" width="1.2" height="1.5" fill="#e040e0"/><rect x="3.5" y="1.5" width="13" height="12" fill="#f6f6f6" stroke="#9a9a9a" stroke-width=".8"/><rect x="4.2" y="2.2" width="11.6" height="2.6" fill="#8cc6f2"/><path d="M5.5 7h2M8.5 7h2M5.5 9.5h2M8.5 9.5h2M5.5 12h2M8.5 12h2M11.5 7h2" stroke="#555" stroke-width="1.1"/><rect x="11.5" y="8.6" width="2.2" height="4" fill="#3a8ae8"/><rect x="17.3" y="11.5" width="1" height="1" fill="#666"/></svg>
<div class="a" style="left:315px;top:391px;width:735px;height:1px;background:#999"></div>
<div class="a" style="left:315px;top:392px;width:735px;height:21px;background:#e9e9e9"></div>
<div class="a" style="left:317px;top:393px;width:48px;height:20px;background:linear-gradient(180deg,#f3f5f8,#c6d3df);border-left:1px solid #888;border-right:1px solid #888;border-top:1px solid #d0d0d0"></div>
<div class="t" style="left:321px;top:398px;font-size:12px;font-weight:bold">Tareas</div>
<div class="a" style="left:365px;top:394px;width:63px;height:19px;background:linear-gradient(180deg,#eaeef3,#c8d5e2);border-right:1px solid #888"></div>
<div class="t" style="left:368px;top:397px;font-size:11.5px;transform:scaleX(0.92);transform-origin:0 0;">Respuestos</div>
<div class="a" style="left:428px;top:394px;width:65px;height:19px;background:linear-gradient(180deg,#eaeef3,#c8d5e2);border-right:1px solid #888"></div>
<div class="t" style="left:431px;top:397px;font-size:11.5px;transform:scaleX(0.92);transform-origin:0 0;">Trazabilidad</div>
<div class="a" style="left:493px;top:394px;width:53px;height:19px;background:linear-gradient(180deg,#eaeef3,#c8d5e2);border-right:1px solid #888"></div>
<div class="t" style="left:496px;top:397px;font-size:11.5px;transform:scaleX(0.92);transform-origin:0 0;">Recursos</div>
<div class="a" style="left:546px;top:394px;width:47px;height:19px;background:linear-gradient(180deg,#eaeef3,#c8d5e2);border-right:1px solid #888"></div>
<div class="t" style="left:549px;top:397px;font-size:11.5px;transform:scaleX(0.92);transform-origin:0 0;">Detalles</div>
<div class="a" style="left:315px;top:412px;width:735px;height:1px;background:#888"></div>
<div class="a" style="left:315px;top:413px;width:735px;height:189px;background:#f0f0f0;border-left:1px solid #999;border-bottom:2px solid #808080"></div>
<div class="a" style="left:316px;top:413px;width:1px;height:188px;background:#fff"></div>
<div class="a" style="left:315px;top:602px;width:735px;height:1px;background:#fff"></div>
<div class="a" style="left:319px;top:416px;width:686px;height:182px;background:#c0c0c0"></div>
<div class="a" style="left:319px;top:416px;width:639px;height:17px;background:#808080"></div>
<div class="t" style="left:321px;top:420px;font-size:11px;color:#f0f0f0">Id.</div>
<div class="t" style="left:349px;top:420px;font-size:11px;color:#f0f0f0">Descripción</div>
<div class="t" style="left:642px;top:420px;font-size:11px;color:#f0f0f0">Estado</div>
<div class="t" style="left:707px;top:420px;font-size:11px;color:#f0f0f0">Horas</div>
<div class="t" style="left:740px;top:420px;font-size:11px;color:#f0f0f0">Repuestos</div>
<div class="t" style="left:805px;top:420px;font-size:11px;color:#f0f0f0">Mano de Obra</div>
<div class="t" style="left:882px;top:420px;font-size:11px;color:#f0f0f0">Fecha Fin</div>
<div class="a" style="left:319px;top:433px;width:639px;height:16px;background:#fff"></div>
<div class="a" style="left:347px;top:433px;width:1px;height:16px;background:#808080"></div>
<div class="a" style="left:640px;top:433px;width:1px;height:16px;background:#808080"></div>
<div class="a" style="left:705px;top:433px;width:1px;height:16px;background:#808080"></div>
<div class="a" style="left:738px;top:433px;width:1px;height:16px;background:#808080"></div>
<div class="a" style="left:803px;top:433px;width:1px;height:16px;background:#808080"></div>
<div class="a" style="left:880px;top:433px;width:1px;height:16px;background:#808080"></div>
<div class="t" style="left:266px;width:78px;text-align:right;top:437px;font-size:11px;">001</div>
<div class="t" style="left:349px;top:437px;font-size:11px;transform:scaleX(0.965);transform-origin:0 0;">Cambio de Aceite</div>
<div class="t" style="left:642px;top:437px;font-size:11px;">Pendiente</div>
<div class="t" style="left:657px;width:78px;text-align:right;top:437px;font-size:11px;">0</div>
<div class="t" style="left:722px;width:78px;text-align:right;top:437px;font-size:11px;">258,85</div>
<div class="t" style="left:799px;width:78px;text-align:right;top:437px;font-size:11px;">0,00</div>
<div class="a" style="left:319px;top:449px;width:639px;height:16px;background:#fff"></div>
<div class="a" style="left:347px;top:449px;width:1px;height:16px;background:#808080"></div>
<div class="a" style="left:640px;top:449px;width:1px;height:16px;background:#808080"></div>
<div class="a" style="left:705px;top:449px;width:1px;height:16px;background:#808080"></div>
<div class="a" style="left:738px;top:449px;width:1px;height:16px;background:#808080"></div>
<div class="a" style="left:803px;top:449px;width:1px;height:16px;background:#808080"></div>
<div class="a" style="left:880px;top:449px;width:1px;height:16px;background:#808080"></div>
<div class="t" style="left:266px;width:78px;text-align:right;top:453px;font-size:11px;">002</div>
<div class="t" style="left:349px;top:453px;font-size:11px;transform:scaleX(0.965);transform-origin:0 0;">Niveles liquidos</div>
<div class="t" style="left:642px;top:453px;font-size:11px;">Pendiente</div>
<div class="t" style="left:657px;width:78px;text-align:right;top:453px;font-size:11px;">0</div>
<div class="t" style="left:722px;width:78px;text-align:right;top:453px;font-size:11px;">267,70</div>
<div class="t" style="left:799px;width:78px;text-align:right;top:453px;font-size:11px;">0,00</div>
<div class="a" style="left:319px;top:465px;width:639px;height:16px;background:#0080c0"></div>
<div class="a" style="left:347px;top:465px;width:1px;height:16px;background:#2a6a9a"></div>
<div class="a" style="left:640px;top:465px;width:1px;height:16px;background:#2a6a9a"></div>
<div class="a" style="left:705px;top:465px;width:1px;height:16px;background:#2a6a9a"></div>
<div class="a" style="left:738px;top:465px;width:1px;height:16px;background:#2a6a9a"></div>
<div class="a" style="left:803px;top:465px;width:1px;height:16px;background:#2a6a9a"></div>
<div class="a" style="left:880px;top:465px;width:1px;height:16px;background:#2a6a9a"></div>
<div class="t" style="left:266px;width:78px;text-align:right;top:469px;font-size:11px;font-weight:bold;color:#fff;font-size:11.5px;letter-spacing:.2px">003</div>
<div class="t" style="left:349px;top:469px;font-size:11px;transform:scaleX(1.03);transform-origin:0 0;font-weight:bold;color:#fff;font-size:11.5px;letter-spacing:.2px">Revision frenos</div>
<div class="t" style="left:642px;top:469px;font-size:11px;font-weight:bold;color:#fff;font-size:11.5px;letter-spacing:.2px">Pendiente</div>
<div class="t" style="left:657px;width:78px;text-align:right;top:469px;font-size:11px;font-weight:bold;color:#fff;font-size:11.5px;letter-spacing:.2px">0</div>
<div class="t" style="left:722px;width:78px;text-align:right;top:469px;font-size:11px;font-weight:bold;color:#fff;font-size:11.5px;letter-spacing:.2px">1.070,80</div>
<div class="t" style="left:799px;width:78px;text-align:right;top:469px;font-size:11px;font-weight:bold;color:#fff;font-size:11.5px;letter-spacing:.2px">0,00</div>
<div class="a" style="left:319px;top:481px;width:639px;height:16px;background:#fff"></div>
<div class="a" style="left:347px;top:481px;width:1px;height:16px;background:#808080"></div>
<div class="a" style="left:640px;top:481px;width:1px;height:16px;background:#808080"></div>
<div class="a" style="left:705px;top:481px;width:1px;height:16px;background:#808080"></div>
<div class="a" style="left:738px;top:481px;width:1px;height:16px;background:#808080"></div>
<div class="a" style="left:803px;top:481px;width:1px;height:16px;background:#808080"></div>
<div class="a" style="left:880px;top:481px;width:1px;height:16px;background:#808080"></div>
<div class="t" style="left:266px;width:78px;text-align:right;top:485px;font-size:11px;">003</div>
<div class="t" style="left:349px;top:485px;font-size:11px;transform:scaleX(0.965);transform-origin:0 0;">Revision frenos</div>
<div class="t" style="left:642px;top:485px;font-size:11px;">Pendiente</div>
<div class="t" style="left:657px;width:78px;text-align:right;top:485px;font-size:11px;">0</div>
<div class="t" style="left:722px;width:78px;text-align:right;top:485px;font-size:11px;">1.070,80</div>
<div class="t" style="left:799px;width:78px;text-align:right;top:485px;font-size:11px;">0,00</div>
<div class="a" style="left:319px;top:465px;width:639px;height:16px;border:1px dotted #e07020;background:transparent"></div>
<div class="a" style="left:1005px;top:416px;width:1px;height:182px;background:#fff"></div>
<div class="a" style="left:1006px;top:416px;width:15px;height:182px;background:#f0f0f0"></div>
<div class="a" style="left:1006px;top:475px;width:15px;height:85px;background:#cdcdcd"></div>
<svg class="a" style="left:1009px;top:420px" width="9" height="6"><path d="M0.5 5.5L4.5 1.5L8.5 5.5" stroke="#555" stroke-width="1.6" fill="none"/></svg>
<svg class="a" style="left:1009px;top:586px" width="9" height="6"><path d="M0.5 0.5L4.5 4.5L8.5 0.5" stroke="#555" stroke-width="1.6" fill="none"/></svg>
<div class="a" style="left:1022px;top:417px;width:25px;height:22px;background:linear-gradient(180deg,#fdfdfd,#e4e4e4);border:1px solid #c8c8c8;border-radius:4px"></div>
<div class="a" style="left:1022px;top:440px;width:25px;height:22px;background:linear-gradient(180deg,#fdfdfd,#e4e4e4);border:1px solid #c8c8c8;border-radius:4px"></div>
<div class="a" style="left:1022px;top:463px;width:25px;height:22px;background:linear-gradient(180deg,#fdfdfd,#e4e4e4);border:1px solid #c8c8c8;border-radius:4px"></div>
<svg class="a" style="left:1026px;top:420px" width="16" height="16" viewBox="0 0 16 16"><path d="M3.5 3.5H12L15 6.5V15.5H3.5Z" fill="#fff" stroke="#7a72b8"/><path d="M3 0.5V6.5M0 3.5H6" stroke="#f5821f" stroke-width="2.2"/></svg>
<svg class="a" style="left:1026px;top:443px" width="16" height="16" viewBox="0 0 16 16"><rect x="0.5" y="0.5" width="15" height="15" fill="#d6e8fa" stroke="#5a7aaa"/><path d="M3 12L12 3" stroke="#f3b22a" stroke-width="2.5"/><path d="M3 13H14" stroke="#4a7ac0"/></svg>
<svg class="a" style="left:1027px;top:466px" width="15" height="17" viewBox="0 0 15 17"><rect x="1" y="2.5" width="13" height="2" fill="#ccd" stroke="#778"/><path d="M2 5H13L12 16.5H3Z" fill="#e8ecf0" stroke="#778"/><path d="M5 7V15M7.5 7V15M10 7V15" stroke="#889"/></svg>
<div class="t" style="left:333px;top:612px;font-size:11px;transform:scaleX(0.94);transform-origin:0 0;">Kilómetros al Salir</div>
<div class="a" style="left:427px;top:608px;width:117px;height:19px;background:#fff;border:1px solid #7a7a7a"></div>
<div class="t" style="left:427px;width:92px;text-align:right;top:612px;font-size:11px;color:#000">0,00</div>
<svg class="a" style="left:522px;top:610px" width="21" height="16" viewBox="0 0 21 16"><rect x="0.5" y="0.5" width="20" height="15" fill="#dadada" stroke="#a4a4a4"/><rect x="2" y="1" width="1.2" height="11" fill="#1a8a8a"/><rect x="2" y="11" width="1.2" height="1.5" fill="#e040e0"/><rect x="3.5" y="1.5" width="13" height="12" fill="#f6f6f6" stroke="#9a9a9a" stroke-width=".8"/><rect x="4.2" y="2.2" width="11.6" height="2.6" fill="#8cc6f2"/><path d="M5.5 7h2M8.5 7h2M5.5 9.5h2M8.5 9.5h2M5.5 12h2M8.5 12h2M11.5 7h2" stroke="#555" stroke-width="1.1"/><rect x="11.5" y="8.6" width="2.2" height="4" fill="#3a8ae8"/><rect x="17.3" y="11.5" width="1" height="1" fill="#666"/></svg>
<div class="t" style="left:563px;top:612px;font-size:11px;transform:scaleX(0.94);transform-origin:0 0;">Costo Mano de Obra</div>
<div class="a" style="left:670px;top:608px;width:117px;height:19px;background:#fff;border:1px solid #7a7a7a"></div>
<div class="t" style="left:670px;width:92px;text-align:right;top:612px;font-size:11px;color:#000">0,00</div>
<svg class="a" style="left:765px;top:610px" width="21" height="16" viewBox="0 0 21 16"><rect x="0.5" y="0.5" width="20" height="15" fill="#dadada" stroke="#a4a4a4"/><rect x="2" y="1" width="1.2" height="11" fill="#1a8a8a"/><rect x="2" y="11" width="1.2" height="1.5" fill="#e040e0"/><rect x="3.5" y="1.5" width="13" height="12" fill="#f6f6f6" stroke="#9a9a9a" stroke-width=".8"/><rect x="4.2" y="2.2" width="11.6" height="2.6" fill="#8cc6f2"/><path d="M5.5 7h2M8.5 7h2M5.5 9.5h2M8.5 9.5h2M5.5 12h2M8.5 12h2M11.5 7h2" stroke="#555" stroke-width="1.1"/><rect x="11.5" y="8.6" width="2.2" height="4" fill="#3a8ae8"/><rect x="17.3" y="11.5" width="1" height="1" fill="#666"/></svg>
<div class="t" style="left:819px;top:612px;font-size:11px;transform:scaleX(0.94);transform-origin:0 0;">Costo Repuestos</div>
<div class="a" style="left:914px;top:608px;width:118px;height:19px;background:#fff;border:1px solid #7a7a7a"></div>
<div class="t" style="left:914px;width:93px;text-align:right;top:612px;font-size:11px;color:#000">0,00</div>
<svg class="a" style="left:1010px;top:610px" width="21" height="16" viewBox="0 0 21 16"><rect x="0.5" y="0.5" width="20" height="15" fill="#dadada" stroke="#a4a4a4"/><rect x="2" y="1" width="1.2" height="11" fill="#1a8a8a"/><rect x="2" y="11" width="1.2" height="1.5" fill="#e040e0"/><rect x="3.5" y="1.5" width="13" height="12" fill="#f6f6f6" stroke="#9a9a9a" stroke-width=".8"/><rect x="4.2" y="2.2" width="11.6" height="2.6" fill="#8cc6f2"/><path d="M5.5 7h2M8.5 7h2M5.5 9.5h2M8.5 9.5h2M5.5 12h2M8.5 12h2M11.5 7h2" stroke="#555" stroke-width="1.1"/><rect x="11.5" y="8.6" width="2.2" height="4" fill="#3a8ae8"/><rect x="17.3" y="11.5" width="1" height="1" fill="#666"/></svg>
<div class="a" style="left:314px;top:634px;width:738px;height:2px;background:#a0a0a0"></div>
<div class="a" style="left:483px;top:637px;width:1px;height:17px;background:#d0d0d0"></div>
<div class="a" style="left:633px;top:637px;width:1px;height:17px;background:#d0d0d0"></div>
<div class="a" style="left:733px;top:637px;width:1px;height:17px;background:#d0d0d0"></div>
<div class="t" style="left:329px;top:642px;font-size:11px;">Ult. Mod.: 2023-09-27 17:47</div>
<div class="t" style="left:528px;top:642px;font-size:11px;">Usuario: XXX</div>
<div class="t" style="left:637px;top:642px;font-size:11px;">FL569</div>
<div class="a" style="left:1048px;top:645px;width:2px;height:2px;background:#a0a0a0"></div>
<div class="a" style="left:1045px;top:648px;width:2px;height:2px;background:#a0a0a0"></div>
<div class="a" style="left:1048px;top:648px;width:2px;height:2px;background:#a0a0a0"></div>
<div class="a" style="left:1042px;top:651px;width:2px;height:2px;background:#a0a0a0"></div>
<div class="a" style="left:1045px;top:651px;width:2px;height:2px;background:#a0a0a0"></div>
<div class="a" style="left:1048px;top:651px;width:2px;height:2px;background:#a0a0a0"></div>
<div class="a" style="left:1050px;top:171px;width:2px;height:464px;background:#a0a0a0"></div>
<div class="a" style="left:314px;top:171px;width:1px;height:463px;background:#fff"></div>
<div class="a" style="left:315px;top:172px;width:1px;height:219px;background:#fff"></div>
</body></html>
